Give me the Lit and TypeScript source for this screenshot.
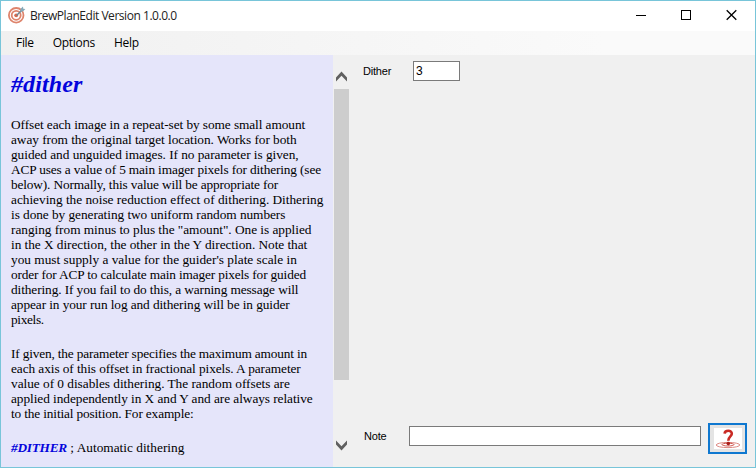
import { LitElement, html, css } from "lit";
import { customElement } from "lit/decorators.js";

/** A line of help text and its letter-spacing in px. */
type Line = [text: string, tracking: number];

const INTRO: Line[] = [
  ["Offset each image in a repeat-set by some small amount", -0.08],
  ["away from the original target location. Works for both", -0.05],
  ["guided and unguided images. If no parameter is given,", -0.05],
  ["ACP uses a value of 5 main imager pixels for dithering (see", -0.14],
  ["below). Normally, this value will be appropriate for", -0.15],
  ["achieving the noise reduction effect of dithering. Dithering", -0.02],
  ["is done by generating two uniform random numbers", -0.06],
  ["ranging from minus to plus the \"amount\". One is applied", -0.04],
  ["in the X direction, the other in the Y direction. Note that", -0.05],
  ["you must supply a value for the guider's plate scale in", 0],
  ["order for ACP to calculate main imager pixels for guided", -0.15],
  ["dithering. If you fail to do this, a warning message will", -0.1],
  ["appear in your run log and dithering will be in guider", -0.09],
  ["pixels.", -0.35],
];

const PARAMETER: Line[] = [
  ["If given, the parameter specifies the maximum amount in", -0.17],
  ["each axis of this offset in fractional pixels. A parameter", -0.08],
  ["value of 0 disables dithering. The random offsets are", -0.03],
  ["applied independently in X and Y and are always relative", -0.06],
  ["to the initial position. For example:", -0.15],
];

@customElement("help-pane")
export class HelpPane extends LitElement {
  static styles = css`
    :host { display: flex; width: 349px; flex: none; }
    .doc {
      box-sizing: border-box; width: 332px; padding: 14px 0 0 10px; overflow: hidden;
      background: #e5e5fa; color: #000; white-space: nowrap;
      font: 13.33px/15px "Liberation Serif", "Times New Roman", serif;
    }
    h1 { margin: 0 0 18px; font-size: 24px; line-height: 30px; letter-spacing: 0.1px; font-style: italic; font-weight: bold; color: #0404dc; }
    p { margin: 0 0 19px; }
    .line { display: block; }
    .cmd { color: #0404dc; font-weight: bold; font-style: italic; letter-spacing: -0.25px; }
    .bar {
      box-sizing: border-box; width: 17px; padding-left: 1px;
      display: flex; flex-direction: column; background: #f0f0f0;
    }
    .arrow { height: 34px; flex: none; display: block; width: 16px; }
    .thumb { height: 291px; width: 15px; background: #cdcdcd; flex: none; }
    .gap { flex: 1; }
    .arrow.down { height: 35px; }
    path { fill: #606060; }
  `;
  private para(lines: Line[]) {
    return html`<p>${lines.map(
      ([text, tracking]) => html`<span class="line" style="letter-spacing:${tracking}px">${text}</span>`
    )}</p>`;
  }
  render() {
    return html`
      <div class="doc">
        <h1>#dither</h1>
        ${this.para(INTRO)}${this.para(PARAMETER)}
        <p><span class="cmd">#DITHER</span> ; Automatic dithering</p>
      </div>
      <div class="bar">
        <svg class="arrow" viewBox="0 0 16 34"><path d="M2 22.5L7.5 16.5L13 22.5V26.5L7.5 20.8L2 26.5Z" /></svg>
        <div class="thumb"></div>
        <div class="gap"></div>
        <svg class="arrow down" viewBox="0 0 16 35"><path d="M2 12.5L7.5 18.5L13 12.5V8.5L7.5 14.2L2 8.5Z" /></svg>
      </div>`;
  }
}

@customElement("app-root")
export class AppRoot extends LitElement {
  static styles = css`
    :host {
      display: flex; flex-direction: column; box-sizing: border-box; width: 756px; height: 468px;
      border: 1px solid #78c5d9; background: #f0f0f0; color: #000; overflow: hidden;
      font: 12px/16px "Open Sans", "Noto Sans", sans-serif;
    }
    .title { height: 30px; flex: none; display: flex; align-items: center; background: #fff; }
    .logo { width: 18px; height: 18px; margin: -2px 4px 0 7px; }
    .caption { flex: 1; color: #222; letter-spacing: -0.46px; }
    .controls { width: 137px; height: 30px; }
    .menu {
      height: 24px; flex: none; display: flex; align-items: center; padding-left: 15px;
      background: linear-gradient(90deg, #f0f0f0, #fafafa 80%);
      letter-spacing: -0.3px;
    }
    .menu span { margin-right: 19px; }
    .main { flex: 1; min-height: 0; display: flex; }
    .form {
      flex: 1; display: flex; flex-direction: column; justify-content: space-between;
      padding: 6px 8px 13px 13px; font: 11px/14px "Liberation Sans", Arial, sans-serif;
    }
    .row { display: flex; align-items: center; }
    .label { width: 50px; letter-spacing: -0.2px; }
    .field {
      box-sizing: border-box; width: 47px; height: 20px; border: 1px solid #7a7a7a; background: #fff;
      padding-left: 2px; font-size: 12px; line-height: 18px;
    }
    .note .label { width: 46px; padding-left: 1px; box-sizing: border-box; margin-top: -5px; }
    .note .field { width: 292px; margin-top: -5px; }
    .help {
      box-sizing: border-box; width: 39px; height: 31px; margin-left: 7px; padding: 0;
      border: 2px solid #0f78d0; background: #e4e4e4; display: grid; place-items: center;
    }
    .help svg { display: block; }
  `;
  render() {
    return html`
      <div class="title">
        <svg class="logo" viewBox="0 0 18 18">
          <circle cx="8.2" cy="9.3" r="7.3" fill="#fff" stroke="#de846c" stroke-width="1.8" />
          <circle cx="8.2" cy="9.3" r="4.5" fill="#fff" stroke="#de846c" stroke-width="1.8" />
          <circle cx="8.2" cy="9.3" r="1.9" fill="#d9694c" />
          <path d="M8.5 9.5 L14 4" stroke="#6b8795" stroke-width="1.4" />
          <path d="M12.3 5.7 L12.6 2.8 L15 .6 L15.3 2.7 L17.4 3 L15.2 5.3Z" fill="#86a9b8" />
        </svg>
        <span class="caption">BrewPlanEdit Version 1.0.0.0</span>
        <svg class="controls" viewBox="0 0 137 30" fill="none" stroke="#000">
          <path d="M18 14.5H28" />
          <rect x="63.5" y="9.5" width="9" height="9" />
          <path d="M108.7 9.2L118.3 18.8M118.3 9.2L108.7 18.8" stroke-width="1.3" />
        </svg>
      </div>
      <div class="menu"><span>File</span><span>Options</span><span>Help</span></div>
      <div class="main">
        <help-pane></help-pane>
        <div class="form">
          <div class="row"><span class="label">Dither</span><div class="field">3</div></div>
          <div class="row note">
            <span class="label">Note</span><div class="field"></div>
            <div class="help">
              <svg width="28" height="21" viewBox="0 0 28 21">
                <rect width="28" height="21" fill="#fff" />
                <g fill="none">
                  <ellipse cx="14" cy="17" rx="11.8" ry="2.6" stroke="#dd8a84" />
                  <ellipse cx="14" cy="16.6" rx="6" ry="1.4" stroke="#cf5650" />
                  <path d="M10.6 5.6C10.8 1.8 18 1.8 17.8 5.6C17.7 8.6 14.4 8.2 14.3 12.8" stroke="#c92a24" stroke-width="2.6" />
                </g>
                <circle cx="14.3" cy="15.6" r="1.8" fill="#a81c18" />
              </svg>
            </div>
          </div>
        </div>
      </div>`;
  }
}
